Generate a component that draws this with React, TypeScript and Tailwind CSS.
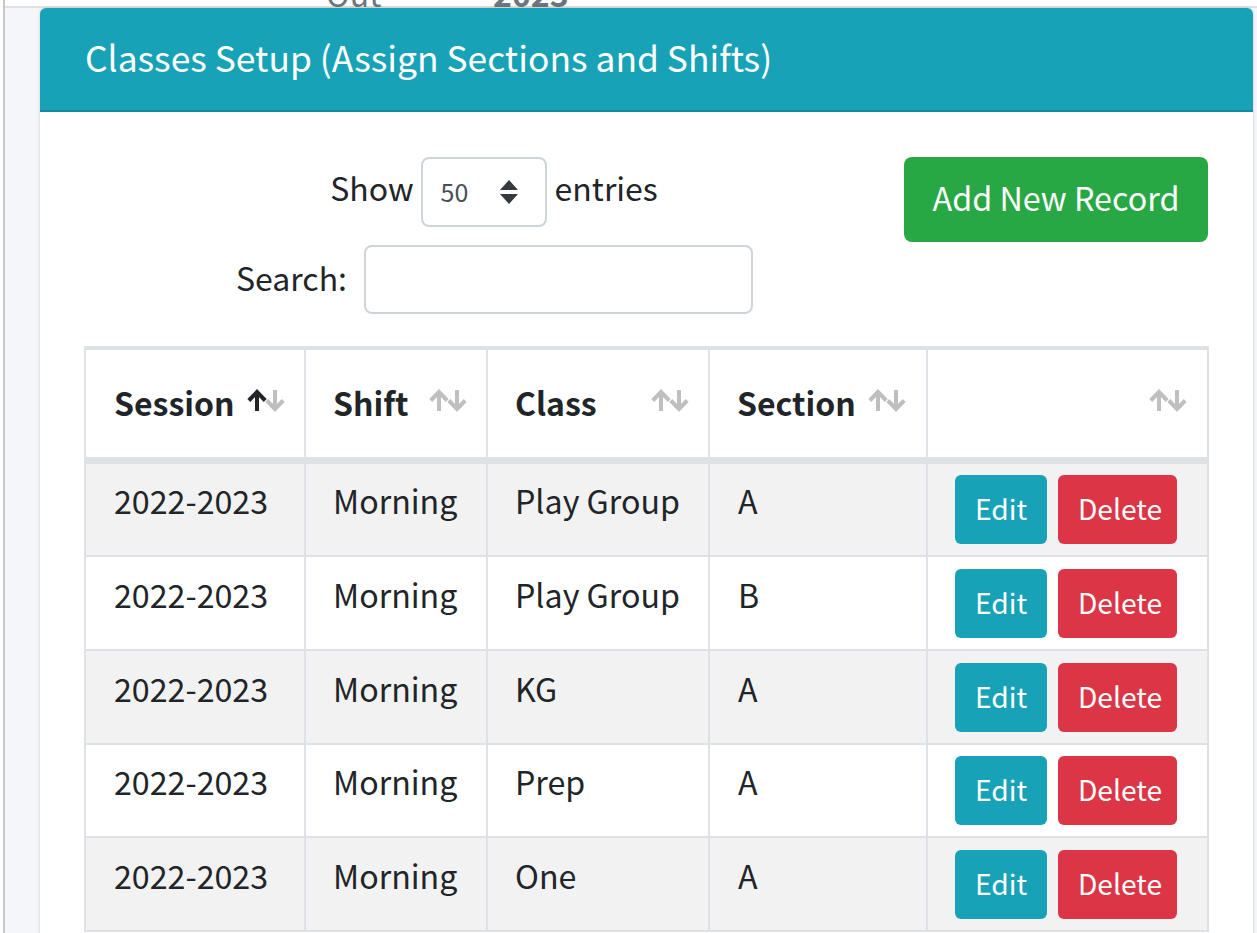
const font = { fontFamily: '"Noto Sans CJK SC", "Noto Sans", sans-serif' };

const rows = [
  ["Play Group", "A", "h-[96px]", "pb-[19px]"],
  ["Play Group", "B", "h-[94px]", "pb-[18px]"],
  ["KG", "A", "h-[94px]", "pb-[18px]"],
  ["Prep", "A", "h-[93px]", "pb-[19px]"],
  ["One", "A", "h-[94px]", "pb-[18px]"],
];

function SortIcons({ active = false, left }: { active?: boolean; left: number }) {
  return (
    <span className="absolute top-[39px] h-[24px] w-[38px]" style={{ left }}>
      <svg width="38" height="24" viewBox="0 0 38 24" fill="none" strokeWidth="4">
        <path d="M28 1v19M19.8 11.5 28 20l8.2-8.5" stroke="#bfbfbf" />
        <path d="M10 22V3M1.8 11.5 10 3l8.2 8.5" stroke={active ? "#212529" : "#bfbfbf"} />
      </svg>
    </span>
  );
}

export default function App() {
  return (
    <div className="h-[933px] w-[1257px] overflow-hidden bg-white text-[32px] text-[#212529]" style={font}>
      <div className="ml-[3px] h-[933px] border-l-2 border-[#c8c8c8]">
        <div className="relative h-[6px]">
          <div className="absolute left-[321px] top-[-29px] flex h-[44px] leading-[44px] text-[#6c757d]">
            <span className="w-[167px]">Out</span>
            <span className="font-bold">2023</span>
          </div>
        </div>
        <div className="h-[927px] border-t-2 border-[#dee2e6] bg-[#f4f6f9] pl-[35px] pr-[4px]">
          <div className="relative h-[940px] overflow-hidden rounded-t-[6px] bg-white shadow-[0_0_3px_rgba(0,0,0,0.2)]">
            <div className="flex h-[104px] items-center border-b-2 border-[#148a9e] bg-[#17a2b8] pb-[4px] pl-[45px] text-[35.4px] text-white">
              Classes Setup (Assign Sections and Shifts)
            </div>
            <div className="px-[45px] pt-[45px]">
              <div className="flex h-[189px]">
                <div className="w-[818px] shrink-0">
                  <div className="flex h-[70px] items-center justify-center">
                    <span className="pb-[10px]">Show</span>
                    <span className="ml-[7px] mr-[8px] flex h-[70px] w-[126px] items-center justify-between rounded-[8px] border-2 border-[#ced4da] pl-[18px] pr-[26px] text-[25px] text-[#495057]">
                      50
                      <svg width="20" height="26" viewBox="0 0 20 26" fill="#343a40">
                        <path d="M10 1 19 11H1zM10 25 1 15h18z" />
                      </svg>
                    </span>
                    <span className="pb-[10px]">entries</span>
                  </div>
                  <div className="mt-[17px] flex h-[70px] items-center justify-center pl-[1px]">
                    <span className="mr-[17px] pb-[4px]">Search:</span>
                    <span className="h-[69px] w-[389px] rounded-[8px] border-2 border-[#ced4da] bg-white" />
                  </div>
                </div>
                <div className="flex flex-1 justify-end">
                  <button className="h-[85px] w-[304px] rounded-[8px] bg-[#28a745] pb-[4px] text-[32.3px] text-white">Add New Record</button>
                </div>
              </div>
              <table className="-ml-px w-[1123px] table-fixed border-collapse border-2 border-[#dee2e6]">
                <colgroup>
                  <col className="w-[220px]" />
                  <col className="w-[182px]" />
                  <col className="w-[222px]" />
                  <col className="w-[218px]" />
                  <col className="w-[281px]" />
                </colgroup>
                <thead>
                  <tr className="h-[112px] border-t-4 border-b-[7px] border-[#dee2e6]">
                    {[
                      ["Session", 161, true, "pl-[28px]"],
                      ["Shift", 123, false, "pl-[27px]"],
                      ["Class", 163, false, "pl-[27px]"],
                      ["Section", 158, false, "pl-[27px]"],
                      ["", 221, false, "pl-[27px]"],
                    ].map(([label, left, active, pad]) => (
                      <th key={String(left)} className={`relative border-x-2 border-[#dee2e6] pb-[2px] text-left font-bold ${pad as string}`}>
                        {label as string}
                        <SortIcons left={left as number} active={active as boolean} />
                      </th>
                    ))}
                  </tr>
                </thead>
                <tbody>
                  {rows.map(([cls, sec, height, pad], i) => (
                    <tr
                      key={i}
                      className={`border-b-2 border-[#dee2e6] text-[32.2px] ${height} ${i % 2 === 0 ? "bg-[#f2f2f2]" : "bg-white"}`}
                    >
                      <td className={`border-x-2 border-[#dee2e6] pl-[28px] ${pad}`}>2022-2023</td>
                      <td className={`border-x-2 border-[#dee2e6] pl-[27px] ${pad}`}>Morning</td>
                      <td className={`border-x-2 border-[#dee2e6] pl-[27px] ${pad}`}>{cls}</td>
                      <td className={`border-x-2 border-[#dee2e6] pl-[28px] ${pad}`}>{sec}</td>
                      <td className="border-x-2 border-[#dee2e6] pl-[27px]">
                        <div className="flex gap-[11px]">
                          <button className="h-[69px] w-[92px] rounded-[6px] bg-[#17a2b8] pb-[2px] text-[28.2px] text-white">Edit</button>
                          <button className="h-[69px] w-[119px] rounded-[6px] bg-[#dc3545] pb-[2px] pl-[5px] text-[28.2px] text-white">Delete</button>
                        </div>
                      </td>
                    </tr>
                  ))}
                </tbody>
              </table>
            </div>
          </div>
        </div>
      </div>
    </div>
  );
}
